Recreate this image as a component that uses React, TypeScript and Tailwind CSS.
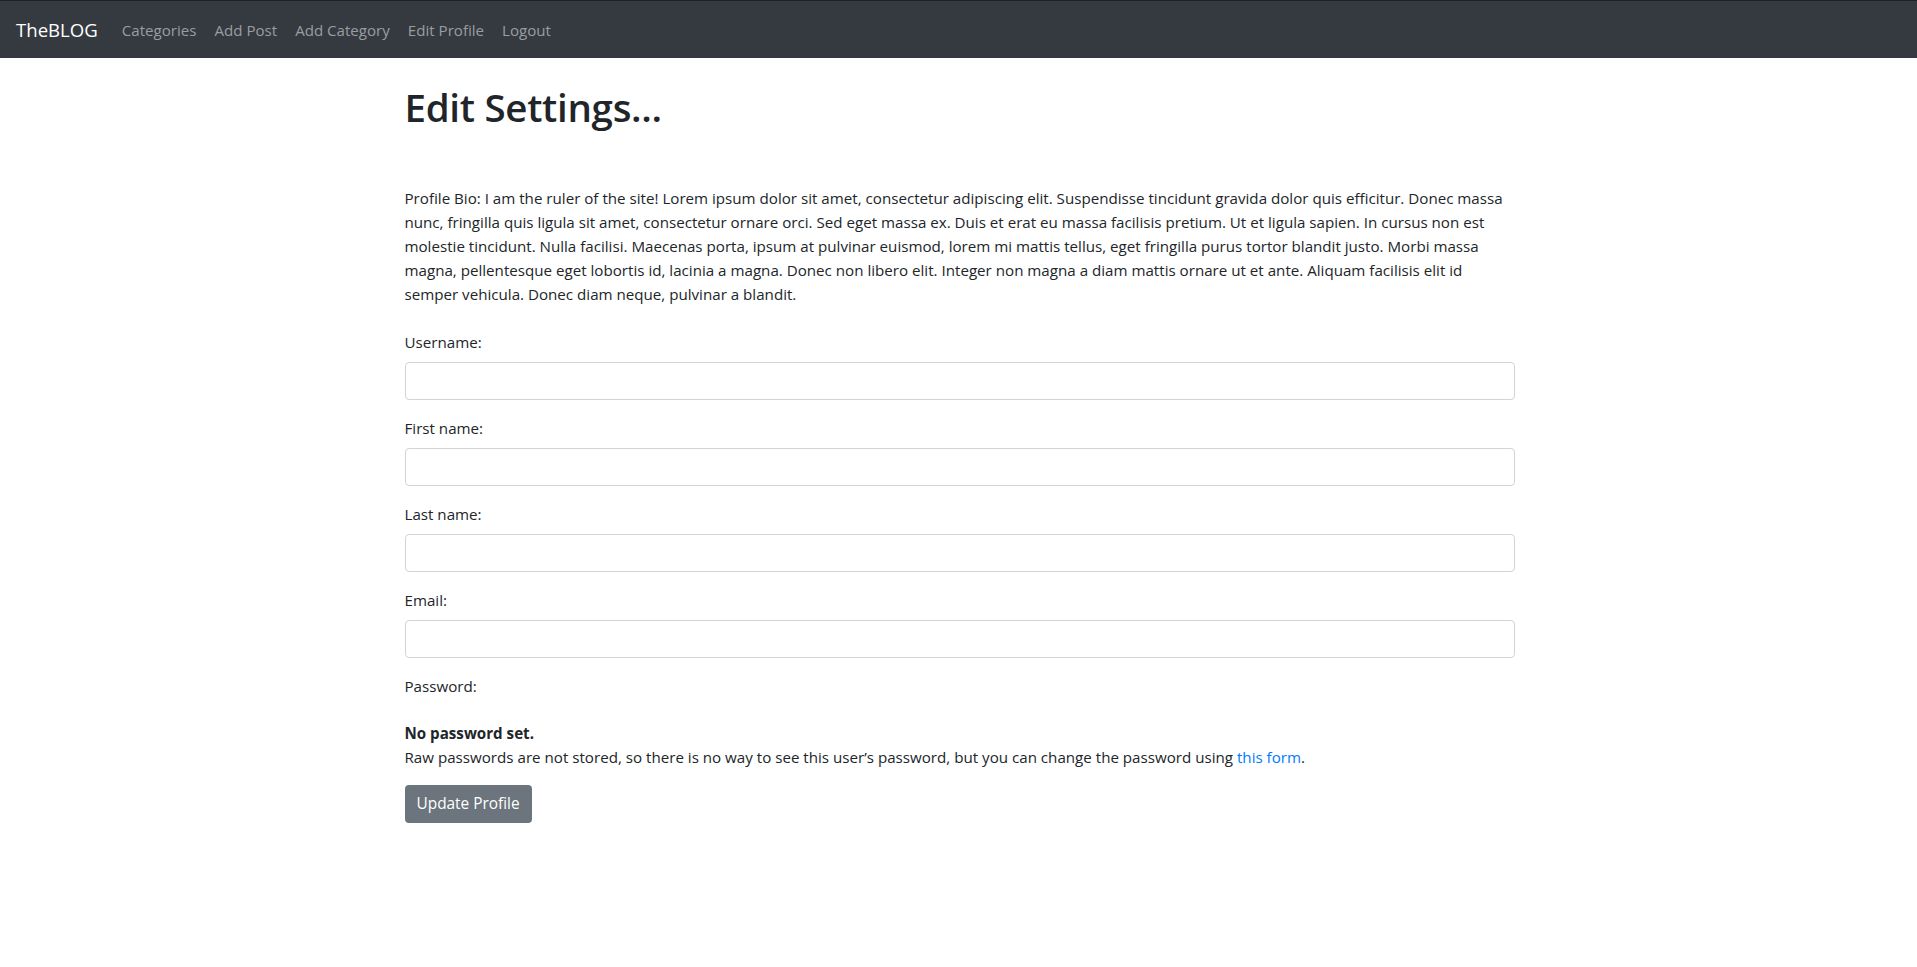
import React from "react";

const font = { fontFamily: '"Open Sans", "Noto Sans", sans-serif' };

const bioLines = [
  "Profile Bio: I am the ruler of the site! Lorem ipsum dolor sit amet, consectetur adipiscing elit. Suspendisse tincidunt gravida dolor quis efficitur. Donec massa",
  "nunc, fringilla quis ligula sit amet, consectetur ornare orci. Sed eget massa ex. Duis et erat eu massa facilisis pretium. Ut et ligula sapien. In cursus non est",
  "molestie tincidunt. Nulla facilisi. Maecenas porta, ipsum at pulvinar euismod, lorem mi mattis tellus, eget fringilla purus tortor blandit justo. Morbi massa",
  "magna, pellentesque eget lobortis id, lacinia a magna. Donec non libero elit. Integer non magna a diam mattis ornare ut et ante. Aliquam facilisis elit id",
  "semper vehicula. Donec diam neque, pulvinar a blandit.",
];

function Field({ label }: { label: string }) {
  return (
    <div className="mb-4">
      <label className="block leading-6 mb-2">{label}</label>
      <input
        type="text"
        className="block w-full h-[38px] rounded-[4px] border border-[#ced4da] bg-white px-3 outline-none"
      />
    </div>
  );
}

export default function App() {
  return (
    <div className="min-h-screen bg-white text-[#212529] text-[15.15px]" style={font}>
      <nav className="h-[58px] bg-[#343a40] border-t border-[#1e2124] flex items-center px-4">
        <a className="text-white text-[18.6px] leading-[30px] mr-[15px]">TheBLOG</a>
        <div className="flex items-center">
          {["Categories", "Add Post", "Add Category", "Edit Profile", "Logout"].map((l) => (
            <a key={l} className="px-[9px] text-[15.1px] leading-6 text-[#9a9da0]">
              {l}
            </a>
          ))}
        </div>
      </nav>
      <main className="w-[1140px] mx-auto pl-[16px] pr-[14px]">
        <h1 className="mt-[25px] text-[38.5px] leading-[48px] font-semibold tracking-[-0.3px]">Edit Settings...</h1>
        <div className="mt-[55px] leading-6">
          {bioLines.map((l, i) => (
            <div key={i} className="whitespace-nowrap">
              {l}
            </div>
          ))}
        </div>
        <form className="mt-6" onSubmit={(e) => e.preventDefault()}>
          <Field label="Username:" />
          <Field label="First name:" />
          <Field label="Last name:" />
          <Field label="Email:" />
          <div className="leading-6">Password:</div>
          <div className="mt-[23px] leading-6 font-bold">No password set.</div>
          <div className="leading-6">
            Raw passwords are not stored, so there is no way to see this user’s password, but you can change the password using{" "}
            <a className="text-[#007bff]">this form</a>.
          </div>
          <button
            type="submit"
            className="mt-4 h-[38px] px-3 rounded-[4px] bg-[#6c757d] text-white text-[15.4px] leading-6"
          >
            Update Profile
          </button>
        </form>
      </main>
    </div>
  );
}
